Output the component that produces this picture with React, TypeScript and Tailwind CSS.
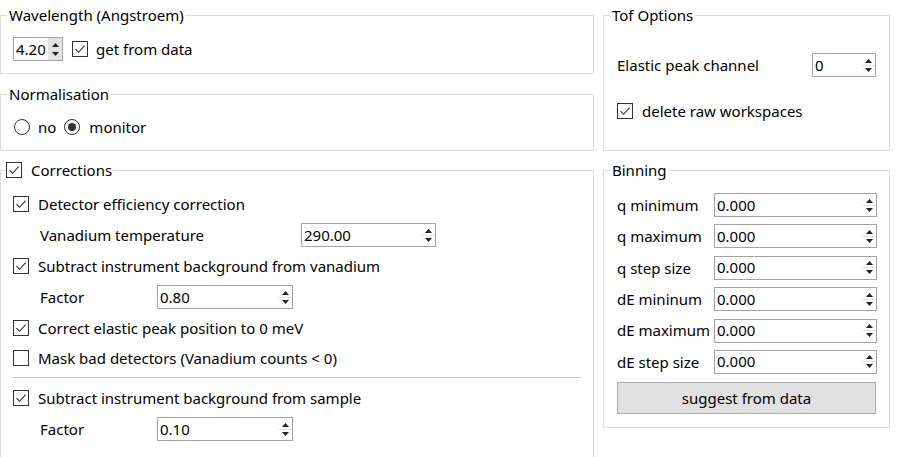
import React from 'react'

const font = { fontFamily: '"Noto Sans", "Open Sans", sans-serif' }

function Check({ checked }: { checked: boolean }) {
  return (
    <svg width="16" height="16" viewBox="0 0 16 16" className="shrink-0">
      <rect x="0.5" y="0.5" width="15" height="15" fill="#fff" stroke="#333" />
      {checked && <path d="M3.5 8.2 L6.6 11.3 L12.6 4.6" fill="none" stroke="#333" strokeWidth="1.1" />}
    </svg>
  )
}

function Radio({ checked }: { checked: boolean }) {
  return (
    <svg width="16" height="16" viewBox="0 0 16 16" className="shrink-0">
      <circle cx="8" cy="8" r="7.5" fill="#fff" stroke="#333" />
      {checked && <circle cx="8" cy="8" r="4" fill="#333" />}
    </svg>
  )
}

function Spin({ value, width, shaded }: { value: string; width: number; shaded?: boolean }) {
  return (
    <div
      className="flex h-6 shrink-0 items-stretch border border-[#a3a3a3] bg-white"
      style={{ width }}
    >
      <div className="flex flex-1 items-center pl-[2px] leading-none">{value}</div>
      <div className={`flex w-[14px] flex-col ${shaded ? 'bg-[#e3e3e3]' : 'bg-white'}`}>
        <div className="flex flex-1 items-end justify-center border-b border-[#e6e6e6] pb-[2px]">
          <svg width="7" height="4" viewBox="0 0 7 4"><path d="M0 4 L3.5 0 L7 4 Z" fill="#222" /></svg>
        </div>
        <div className="flex flex-1 items-start justify-center pt-[2px]">
          <svg width="7" height="4" viewBox="0 0 7 4"><path d="M0 0 L3.5 4 L7 0 Z" fill="#222" /></svg>
        </div>
      </div>
    </div>
  )
}

function Group({ title, height, children }: { title: React.ReactNode; height: number; children: React.ReactNode }) {
  return (
    <fieldset className="min-w-0 shrink-0 border border-[#dcdcdc] px-0" style={{ height }}>
      <legend className="ml-[6px] px-[2px] leading-5">{title}</legend>
      {children}
    </fieldset>
  )
}

function CheckRow({ label, checked = true }: { label: string; checked?: boolean }) {
  return (
    <div className="flex h-[30px] items-center gap-[9px]">
      <Check checked={checked} />
      <span>{label}</span>
    </div>
  )
}

const binning = ['q minimum', 'q maximum', 'q step size', 'dE mininum', 'dE maximum', 'dE step size']

export default function App() {
  return (
    <div className="flex h-[457px] gap-[9px] overflow-hidden bg-white pt-[5px] text-[15px] text-black" style={font}>
      <div className="flex w-[594px] shrink-0 flex-col gap-[9px]">
        <Group title="Wavelength (Angstroem)" height={69}>
          <div className="flex items-center pl-3 pt-3">
            <Spin value="4.20" width={50} shaded />
            <div className="ml-[9px] flex items-center gap-2">
              <Check checked />
              <span>get from data</span>
            </div>
          </div>
        </Group>
        <div className="mt-px shrink-0">
          <Group title="Normalisation" height={67}>
            <div className="box-content flex h-5 items-center pl-[13px] pt-[13px]">
              <Radio checked={false} />
              <span className="ml-[8px]">no</span>
              <span className="ml-[8px]"><Radio checked /></span>
              <span className="ml-[9px]">monitor</span>
            </div>
          </Group>
        </div>
        <fieldset className="h-[320px] min-w-0 shrink-0 border border-[#dcdcdc] px-0">
          <legend className="ml-[4px] flex items-center gap-[9px] px-px leading-5">
            <Check checked />
            <span>Corrections</span>
          </legend>
          <div className="flex flex-col pl-3 pr-3 pt-[9px]">
            <CheckRow label="Detector efficiency correction" />
            <div className="flex h-8 items-center pl-[27px]">
              <span className="w-[261px]">Vanadium temperature</span>
              <Spin value="290.00" width={135} />
            </div>
            <CheckRow label="Subtract instrument background from vanadium" />
            <div className="flex h-8 items-center pl-[27px]">
              <span className="w-[117px]">Factor</span>
              <Spin value="0.80" width={136} />
            </div>
            <CheckRow label="Correct elastic peak position to 0 meV" />
            <CheckRow label="Mask bad detectors (Vanadium counts < 0)" checked={false} />
            <div className="mb-[5px] mt-[4px] h-px bg-[#c8c8c8]" />
            <CheckRow label="Subtract instrument background from sample" />
            <div className="flex h-8 items-center pl-[27px]">
              <span className="w-[117px]">Factor</span>
              <Spin value="0.10" width={136} />
            </div>
          </div>
        </fieldset>
      </div>

      <div className="flex w-[287px] shrink-0 flex-col gap-[9px]">
        <Group title="Tof Options" height={146}>
          <div className="flex flex-col px-[13px] pt-6">
            <div className="flex h-8 items-center justify-between">
              <span>Elastic peak channel</span>
              <Spin value="0" width={64} />
            </div>
            <div className="mt-[15px] flex h-[30px] items-center gap-[9px]">
              <Check checked />
              <span>delete raw workspaces</span>
            </div>
          </div>
        </Group>
        <Group title="Binning" height={268}>
          <div className="flex flex-col gap-[7.4px] px-[13px] pt-[13px]">
            {binning.map((b) => (
              <div key={b} className="flex h-6 items-center">
                <span className="w-[97px] shrink-0 whitespace-nowrap">{b}</span>
                <Spin value="0.000" width={163} />
              </div>
            ))}
            <button className="mt-[0.6px] h-8 w-[259px] border border-[#adadad] bg-[#e1e1e1] text-center">
              suggest from data
            </button>
          </div>
        </Group>
      </div>
    </div>
  )
}
